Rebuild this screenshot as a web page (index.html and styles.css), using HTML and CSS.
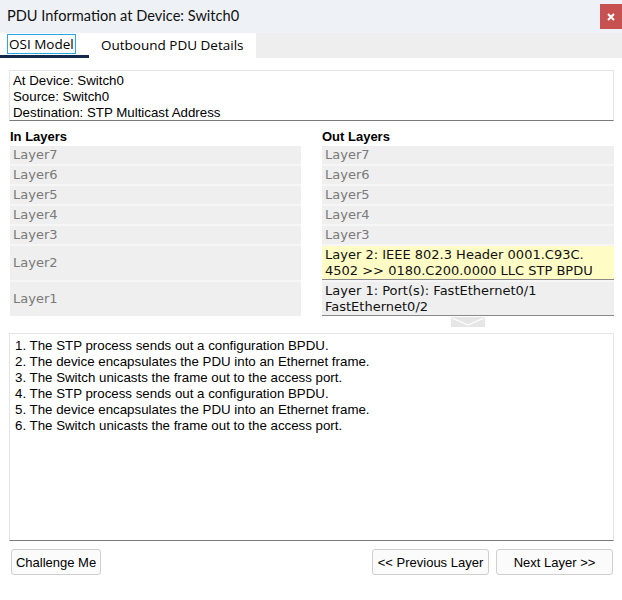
FILE: index.html
```html
<!DOCTYPE html>
<html>
<head>
<meta charset="utf-8">
<link rel="stylesheet" href="styles.css">
</head>
<body>
<div class="window">
  <div class="titlebar">
    <span class="title">PDU Information at Device: Switch0</span>
    <span class="close">
      <svg width="10" height="10" viewBox="0 0 10 10"><path d="M2 2 L8 8 M8 2 L2 8" stroke="#fff" stroke-width="2"/></svg>
    </span>
  </div>
  <div class="tabs">
    <div class="tab active"><span class="focus">OSI Model</span></div>
    <div class="tab">Outbound PDU Details</div>
  </div>
  <div class="content">
    <div class="info">
      <div>At Device: Switch0</div>
      <div>Source: Switch0</div>
      <div>Destination: STP Multicast Address</div>
    </div>
    <div class="layers">
      <div class="col">
        <div class="head">In Layers</div>
        <div class="rows">
          <div class="row">Layer7</div>
          <div class="row">Layer6</div>
          <div class="row">Layer5</div>
          <div class="row">Layer4</div>
          <div class="row">Layer3</div>
          <div class="row tall">Layer2</div>
          <div class="row tall">Layer1</div>
        </div>
      </div>
      <div class="col">
        <div class="head">Out Layers</div>
        <div class="rows">
          <div class="row">Layer7</div>
          <div class="row">Layer6</div>
          <div class="row">Layer5</div>
          <div class="row">Layer4</div>
          <div class="row">Layer3</div>
          <div class="row tall on yellow">Layer 2: IEEE 802.3 Header 0001.C93C.<br>4502 &gt;&gt; 0180.C200.0000 LLC STP BPDU</div>
          <div class="row tall on">Layer 1: Port(s): FastEthernet0/1<br>FastEthernet0/2</div>
        </div>
        <div class="chev">
          <svg width="34" height="10" viewBox="0 0 34 10"><rect width="34" height="10" fill="#e6e6e6"/><path d="M1 1 L17 8 L33 1" stroke="#fff" stroke-width="1.3" fill="none"/></svg>
        </div>
      </div>
    </div>
    <div class="desc">
      <div>1. The STP process sends out a configuration BPDU.</div>
      <div>2. The device encapsulates the PDU into an Ethernet frame.</div>
      <div>3. The Switch unicasts the frame out to the access port.</div>
      <div>4. The STP process sends out a configuration BPDU.</div>
      <div>5. The device encapsulates the PDU into an Ethernet frame.</div>
      <div>6. The Switch unicasts the frame out to the access port.</div>
    </div>
    <div class="buttons">
      <button class="btn challenge">Challenge Me</button>
      <div class="nav">
        <button class="btn prev">&lt;&lt; Previous Layer</button>
        <button class="btn next">Next Layer &gt;&gt;</button>
      </div>
    </div>
  </div>
</div>
</body>
</html>
```

FILE: styles.css
```css
html, body {
  margin: 0;
  padding: 0;
  background: #fff;
}
.window {
  width: 622px;
  height: 600px;
  font-family: "Liberation Sans", Arial, sans-serif;
  color: #000;
}
.titlebar {
  height: 33px;
  background: #eef2f7;
  display: flex;
  justify-content: space-between;
  align-items: flex-start;
}
.title {
  font-family: Lato, "Open Sans", sans-serif;
  font-size: 14.6px;
  line-height: 31px;
  padding-left: 7px;
  color: #111;
}
.close {
  margin-top: 4px;
  width: 22px;
  height: 25px;
  background: #c75050;
  display: flex;
  align-items: center;
  justify-content: center;
}
.tabs {
  height: 25px;
  background: #eeeeee;
  display: flex;
}
.tab {
  background: #fff;
  font-family: "Open Sans", "Noto Sans", sans-serif;
  font-size: 13.5px;
  line-height: 25px;
  padding: 0 12px;
  color: #000;
  box-sizing: border-box;
  white-space: nowrap;
}
.tab.active {
  width: 89px;
  padding: 0 0 0 8px;
  border-bottom: 3px solid #13294b;
  line-height: 22px;
}
.focus {
  outline: 1px solid #29a9e0;
  padding: 0 1px;
}
.tab:not(.active) {
  width: 167px;
}
.content {
  padding: 12px 8px 0 9px;
}
.info {
  height: 51px;
  border: 1px solid #e4e4e4;
  border-bottom: 1px solid #7a7a7a;
  padding: 2px 3px;
  font-size: 13.3px;
  line-height: 16px;
  box-sizing: border-box;
}
.layers {
  display: grid;
  grid-template-columns: 291px 292px;
  column-gap: 21px;
  margin: 8px 0 0 1px;
}
.head {
  font-weight: bold;
  font-size: 13px;
  line-height: 16px;
  height: 17px;
}
.rows {
  display: flex;
  flex-direction: column;
  gap: 2px;
  background: #f6f6f6;
}
.row {
  background: #efefef;
  height: 18px;
  line-height: 18px;
  padding-left: 3px;
  font-family: "DejaVu Sans", Verdana, sans-serif;
  font-size: 13px;
  color: #7a7a7a;
  box-sizing: border-box;
  white-space: nowrap;
}
.row.tall {
  height: 34px;
  display: flex;
  align-items: center;
}
.row.on {
  color: #111;
  line-height: 16px;
  border-bottom: 1px solid #8a8a8a;
  align-items: flex-start;
  padding-top: 1px;
}
.row.yellow {
  background: #fffcc6;
}
.chev {
  display: flex;
  justify-content: center;
  height: 10px;
  margin: 1px 0 6px;
}
.chev svg {
  display: block;
}
.desc {
  height: 208px;
  border: 1px solid #e4e4e4;
  border-bottom: 1px solid #7a7a7a;
  box-sizing: border-box;
  padding: 4px 5px;
  font-size: 13.3px;
  line-height: 16px;
}
.buttons {
  display: flex;
  justify-content: space-between;
  margin-top: 8px;
  padding: 0 1px 0 2px;
}
.nav {
  display: flex;
  gap: 7px;
}
.btn {
  height: 26px;
  background: #fbfbfb;
  border: 1px solid #cfcfcf;
  border-radius: 3px;
  font-family: "Liberation Sans", Arial, sans-serif;
  font-size: 13px;
  color: #000;
  padding: 0;
  white-space: nowrap;
}
.challenge { width: 90px; }
.prev { width: 117px; }
.next { width: 117px; }
```
